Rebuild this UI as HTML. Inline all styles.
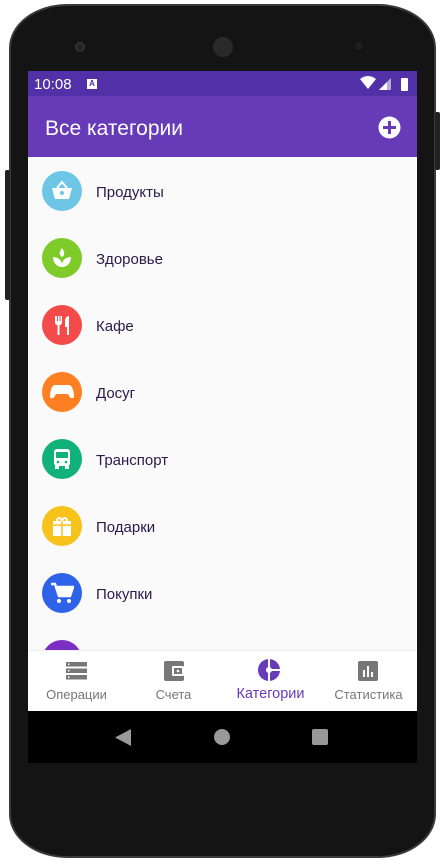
<!DOCTYPE html><html><head><meta charset="utf-8"><style>
*{margin:0;padding:0;box-sizing:border-box}
body{width:447px;height:865px;background:#fff;position:relative;overflow:hidden;font-family:"Liberation Sans",Roboto,sans-serif}
.phone{position:absolute;left:9px;top:4px;width:427px;height:854px;background:#141414;border-radius:58px/44px;border:2px solid #3a3a3a}
.btn{position:absolute;background:#222;border-radius:2px}
.screen{position:absolute;left:28px;top:71px;width:389px;height:692px;background:#fafafa;overflow:hidden}
.sb{position:absolute;left:0;top:0;width:389px;height:25px;background:#5230a8;color:#fff;font-size:15px}
.tb{position:absolute;left:0;top:25px;width:389px;height:61px;background:#673ab7;color:#fff}
.item{position:absolute;left:14px;width:360px;height:40px}
.item .c{position:absolute;left:0;top:0;width:40px;height:40px;border-radius:50%}
.item span{position:absolute;left:54px;top:13px;font-size:15px;color:#2a1a4a}
.nav{position:absolute;left:0;top:579px;width:389px;height:61px;background:#fff;border-top:1px solid #eee}
.nav div{position:absolute;top:36px;font-size:13px;color:#777;width:97px;text-align:center}
.sys{position:absolute;left:0;top:640px;width:389px;height:52px;background:#000}
svg{position:absolute}
</style></head><body>
<div class="phone"></div>
<div class="btn" style="left:435px;top:112px;width:5px;height:58px"></div>
<div class="btn" style="left:5px;top:170px;width:5px;height:130px"></div>
<div style="position:absolute;left:75px;top:42px;width:10px;height:10px;border-radius:50%;background:#222;border:2px solid #333"></div>
<div style="position:absolute;left:213px;top:37px;width:20px;height:20px;border-radius:50%;background:#2a2a2a"></div>
<div style="position:absolute;left:355px;top:42px;width:8px;height:8px;border-radius:50%;background:#1e1e1e"></div>
<div class="screen">
<div class="sb"><span style="position:absolute;left:6px;top:5px">10:08</span>
<div style="position:absolute;left:59px;top:8px;width:10px;height:10px;background:#fff;color:#5230a8;font-size:8px;font-weight:bold;text-align:center;line-height:10px">A</div>
<svg style="left:332px;top:5px" width="52" height="15"><path d="M0 3 Q8 -3 16 3 L8 13Z" fill="#fff"/><path d="M19 14 L31 2 V14Z" fill="#fff" opacity=".6"/><path d="M19 14 L27 6 V14Z" fill="#fff"/><rect x="41" y="2" width="7" height="13" rx="1" fill="#fff"/></svg></div>
<div class="tb"><span style="position:absolute;left:17px;top:21px;font-size:21px">Все категории</span>
<svg style="left:350px;top:20px" width="23" height="23"><circle cx="11.5" cy="11.5" r="11" fill="#fff"/><path d="M11.5 5v13M5 11.5h13" stroke="#673ab7" stroke-width="3"/></svg></div>
<div class="item" style="top:100px"><div class="c" style="background:#6ec6e6"></div><svg style="left:8px;top:9px" width="24" height="22"><path d="M2 8h20l-3 11H5z" fill="#fff"/><path d="M7 8l5-6 5 6" stroke="#fff" stroke-width="2" fill="none"/><circle cx="12" cy="13" r="2" fill="#6ec6e6"/></svg><span>Продукты</span></div>
<div class="item" style="top:167px"><div class="c" style="background:#7ecb2a"></div><svg style="left:8px;top:8px" width="24" height="24"><path d="M12 2c-3 4-3 7 0 9 3-2 3-5 0-9z" fill="#fff"/><path d="M3 11c4 0 8 2 9 7 1-5 5-7 9-7 0 6-4 10-9 10S3 17 3 11z" fill="#fff"/></svg><span>Здоровье</span></div>
<div class="item" style="top:234px"><div class="c" style="background:#f44a4a"></div><svg style="left:8px;top:8px" width="24" height="24"><path d="M5 3v6c0 2 1 3 2.5 3v10h2V12C11 12 12 11 12 9V3h-1.5v5h-1V3h-1.5v5h-1V3z" fill="#fff"/><path d="M15 14V8c0-3 2-5 4-5v19h-2v-8z" fill="#fff"/></svg><span>Кафе</span></div>
<div class="item" style="top:301px"><div class="c" style="background:#ff7f23"></div><svg style="left:7px;top:10px" width="26" height="20"><path d="M6 3h14c3 0 5 6 5 11 0 3-3 3-5 0l-1-2H7l-1 2c-2 3-5 3-5 0C1 9 3 3 6 3z" fill="#fff"/></svg><span>Досуг</span></div>
<div class="item" style="top:368px"><div class="c" style="background:#10b27a"></div><svg style="left:10px;top:8px" width="20" height="24"><rect x="2" y="2" width="16" height="17" rx="3" fill="#fff"/><rect x="4" y="5" width="12" height="6" fill="#10b27a"/><rect x="3" y="18" width="4" height="4" fill="#fff"/><rect x="13" y="18" width="4" height="4" fill="#fff"/><circle cx="6" cy="15" r="1.3" fill="#10b27a"/><circle cx="14" cy="15" r="1.3" fill="#10b27a"/></svg><span>Транспорт</span></div>
<div class="item" style="top:435px"><div class="c" style="background:#f7c21a"></div><svg style="left:8px;top:8px" width="24" height="24"><rect x="3" y="7" width="18" height="15" fill="#fff"/><path d="M3 11h18" stroke="#f7c21a" stroke-width="1.5"/><path d="M12 7v15" stroke="#f7c21a" stroke-width="1.5"/><path d="M7 7c0-4 4-4 5 0 1-4 5-4 5 0" stroke="#fff" stroke-width="2" fill="none"/></svg><span>Подарки</span></div>
<div class="item" style="top:502px"><div class="c" style="background:#2e62e8"></div><svg style="left:8px;top:8px" width="24" height="24"><path d="M1 3h4l4 12h11l3-9H7" stroke="#fff" stroke-width="2.5" fill="none"/><path d="M7 6h16l-3 9H9z" fill="#fff"/><circle cx="9" cy="20" r="2" fill="#fff"/><circle cx="19" cy="20" r="2" fill="#fff"/></svg><span>Покупки</span></div>
<div class="item" style="top:569px"><div class="c" style="background:#7b2fc4"></div></div>
<div class="nav">
<svg style="left:38px;top:11px" width="21" height="18"><rect y="0" width="21" height="4.5" fill="#777"/><rect y="6.5" width="21" height="4.5" fill="#777"/><rect y="13" width="21" height="4.5" fill="#777"/><rect x="2" y="1.5" width="1.5" height="1.5" fill="#fff"/><rect x="2" y="8" width="1.5" height="1.5" fill="#fff"/><rect x="2" y="14.5" width="1.5" height="1.5" fill="#fff"/></svg>
<svg style="left:136px;top:10px" width="20" height="20"><rect width="20" height="20" rx="2" fill="#777"/><rect x="8" y="5" width="12" height="10" rx="1" fill="#fff"/><rect x="10" y="7" width="8" height="6" fill="#777"/><circle cx="14" cy="10" r="1.3" fill="#fff"/></svg>
<svg style="left:230px;top:8px" width="22" height="22"><circle cx="11" cy="11" r="11" fill="#673ab7"/><path d="M11 0v9M11 13v9M13 11h9" stroke="#fff" stroke-width="2"/><circle cx="11" cy="11" r="3" fill="#fff"/></svg>
<svg style="left:330px;top:10px" width="20" height="20"><rect width="20" height="20" rx="2" fill="#777"/><rect x="5" y="9" width="2" height="7" fill="#fff"/><rect x="9" y="5" width="2" height="11" fill="#fff"/><rect x="13" y="11" width="2" height="5" fill="#fff"/></svg>
<div style="left:0">Операции</div><div style="left:97px">Счета</div><div style="left:194px;color:#673ab7;font-size:14.5px;top:35px">Категории</div><div style="left:292px">Статистика</div></div>
<div class="sys">
<svg style="left:87px;top:18px" width="16" height="17"><path d="M16 0v17L0 8.5z" fill="#999"/></svg>
<div style="position:absolute;left:186px;top:18px;width:16px;height:16px;border-radius:50%;background:#999"></div>
<div style="position:absolute;left:284px;top:18px;width:16px;height:16px;border-radius:2px;background:#999"></div></div>
</div>
</body></html>
